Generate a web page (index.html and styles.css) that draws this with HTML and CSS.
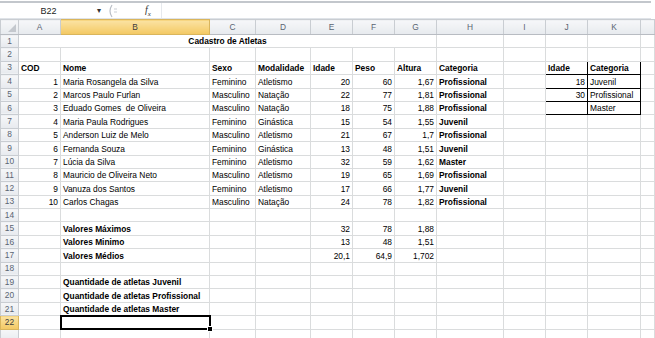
FILE: index.html
```html
<!DOCTYPE html>
<html lang="pt">
<head>
    <meta charset="UTF-8">
    <title>Cadastro de Atletas</title>
    <link rel="stylesheet" href="styles.css">
</head>
<body>
    <div class="formula-bar">
        <div class="name-box">B22</div>
        <div class="drop">&#9662;</div>
        <div class="bar-ctrl">
            <svg width="12" height="14" viewBox="0 0 12 14"><path d="M5 1 Q1 7 5 13" fill="none" stroke="#b9bec6" stroke-width="1.2"/><path d="M7 5h3M7 8h3" stroke="#c9cdd3" stroke-width="1"/></svg>
        </div>
        <div class="fx">f<sub>x</sub></div>
        <div class="formula-input"></div>
    </div>

    <table class="sheet">
        <colgroup>
            <col class="c-rh"><col class="c-a"><col class="c-b"><col class="c-c"><col class="c-d"><col class="c-e"><col class="c-f"><col class="c-g"><col class="c-h"><col class="c-i"><col class="c-j"><col class="c-k"><col>
        </colgroup>
        <tr class="col-heads">
            <th class="corner"><span class="tri"></span></th><th>A</th><th class="sel">B</th><th>C</th><th>D</th><th>E</th><th>F</th><th>G</th><th>H</th><th>I</th><th>J</th><th>K</th><th></th>
        </tr>
        <tr><th>1</th><td colspan="7" class="b center">Cadastro de Atletas</td><td></td><td></td><td></td><td></td><td></td></tr>
        <tr><th>2</th><td></td><td></td><td></td><td></td><td></td><td></td><td></td><td></td><td></td><td></td><td></td><td></td></tr>
        <tr><th>3</th><td class="b">COD</td><td class="b">Nome</td><td class="b">Sexo</td><td class="b">Modalidade</td><td class="b">Idade</td><td class="b">Peso</td><td class="b">Altura</td><td class="b">Categoria</td><td></td><td class="b box">Idade</td><td class="b box">Categoria</td><td></td></tr>
        <tr><th>4</th><td class="n">1</td><td>Maria Rosangela da Silva</td><td>Feminino</td><td>Atletismo</td><td class="n">20</td><td class="n">60</td><td class="n">1,67</td><td class="b">Profissional</td><td></td><td class="n box">18</td><td class="box">Juvenil</td><td></td></tr>
        <tr><th>5</th><td class="n">2</td><td>Marcos Paulo Furlan</td><td>Masculino</td><td>Natação</td><td class="n">22</td><td class="n">77</td><td class="n">1,81</td><td class="b">Profissional</td><td></td><td class="n box">30</td><td class="box">Profissional</td><td></td></tr>
        <tr><th>6</th><td class="n">3</td><td>Eduado Gomes&nbsp; de Oliveira</td><td>Masculino</td><td>Natação</td><td class="n">18</td><td class="n">75</td><td class="n">1,88</td><td class="b">Profissional</td><td></td><td class="box"></td><td class="box">Master</td><td></td></tr>
        <tr><th>7</th><td class="n">4</td><td>Maria Paula Rodrigues</td><td>Feminino</td><td>Ginástica</td><td class="n">15</td><td class="n">54</td><td class="n">1,55</td><td class="b">Juvenil</td><td></td><td></td><td></td><td></td></tr>
        <tr><th>8</th><td class="n">5</td><td>Anderson Luiz de Melo</td><td>Masculino</td><td>Atletismo</td><td class="n">21</td><td class="n">67</td><td class="n">1,7</td><td class="b">Profissional</td><td></td><td></td><td></td><td></td></tr>
        <tr><th>9</th><td class="n">6</td><td>Fernanda Souza</td><td>Feminino</td><td>Ginástica</td><td class="n">13</td><td class="n">48</td><td class="n">1,51</td><td class="b">Juvenil</td><td></td><td></td><td></td><td></td></tr>
        <tr><th>10</th><td class="n">7</td><td>Lúcia da Silva</td><td>Feminino</td><td>Atletismo</td><td class="n">32</td><td class="n">59</td><td class="n">1,62</td><td class="b">Master</td><td></td><td></td><td></td><td></td></tr>
        <tr><th>11</th><td class="n">8</td><td>Mauricio de Oliveira Neto</td><td>Masculino</td><td>Atletismo</td><td class="n">19</td><td class="n">65</td><td class="n">1,69</td><td class="b">Profissional</td><td></td><td></td><td></td><td></td></tr>
        <tr><th>12</th><td class="n">9</td><td>Vanuza dos Santos</td><td>Feminino</td><td>Atletismo</td><td class="n">17</td><td class="n">66</td><td class="n">1,77</td><td class="b">Juvenil</td><td></td><td></td><td></td><td></td></tr>
        <tr><th>13</th><td class="n">10</td><td>Carlos Chagas</td><td>Masculino</td><td>Natação</td><td class="n">24</td><td class="n">78</td><td class="n">1,82</td><td class="b">Profissional</td><td></td><td></td><td></td><td></td></tr>
        <tr><th>14</th><td></td><td></td><td></td><td></td><td></td><td></td><td></td><td></td><td></td><td></td><td></td><td></td></tr>
        <tr><th>15</th><td></td><td class="b">Valores Máximos</td><td></td><td></td><td class="n">32</td><td class="n">78</td><td class="n">1,88</td><td></td><td></td><td></td><td></td><td></td></tr>
        <tr><th>16</th><td></td><td class="b">Valores Minimo</td><td></td><td></td><td class="n">13</td><td class="n">48</td><td class="n">1,51</td><td></td><td></td><td></td><td></td><td></td></tr>
        <tr><th>17</th><td></td><td class="b">Valores Médios</td><td></td><td></td><td class="n">20,1</td><td class="n">64,9</td><td class="n">1,702</td><td></td><td></td><td></td><td></td><td></td></tr>
        <tr><th>18</th><td></td><td></td><td></td><td></td><td></td><td></td><td></td><td></td><td></td><td></td><td></td><td></td></tr>
        <tr><th>19</th><td></td><td class="b">Quantidade de atletas Juvenil</td><td></td><td></td><td></td><td></td><td></td><td></td><td></td><td></td><td></td><td></td></tr>
        <tr><th>20</th><td></td><td class="b">Quantidade de atletas Profissional</td><td></td><td></td><td></td><td></td><td></td><td></td><td></td><td></td><td></td><td></td></tr>
        <tr><th>21</th><td></td><td class="b">Quantidade de atletas Master</td><td></td><td></td><td></td><td></td><td></td><td></td><td></td><td></td><td></td><td></td></tr>
        <tr><th class="sel">22</th><td></td><td class="active"><span class="handle"></span></td><td></td><td></td><td></td><td></td><td></td><td></td><td></td><td></td><td></td><td></td></tr>
        <tr class="last"><th></th><td></td><td></td><td></td><td></td><td></td><td></td><td></td><td></td><td></td><td></td><td></td><td></td></tr>
    </table>
</body>
</html>
```

FILE: styles.css
```css
* {
    box-sizing: border-box;
    margin: 0;
    padding: 0;
}

body {
    background: #ffffff;
    font-family: "Liberation Sans", Arial, sans-serif;
    font-size: 8.4px;
    color: #000000;
    overflow: hidden;
}

.formula-bar {
    display: flex;
    align-items: center;
    height: 18px;
    border-top: 2px solid #c3c7cc;
    border-bottom: 1px solid #dfe3e8;
    margin-top: 1px;
    background: #ffffff;
    width: 651px;
}

.name-box {
    width: 97px;
    text-align: center;
    font-size: 9px;
    color: #222;
}

.drop {
    width: 8px;
    font-size: 8px;
    color: #333;
}

.bar-ctrl {
    display: flex;
    align-items: center;
    width: 40px;
    padding-left: 2px;
}

.fx {
    font-family: "Liberation Serif", serif;
    font-style: italic;
    font-size: 10px;
    width: 16px;
    color: #333;
}

.fx sub {
    font-size: 7px;
}

.formula-input {
    flex: 1;
    height: 100%;
    border-left: 1px solid #e6e9ed;
}

.sheet {
    table-layout: fixed;
    border-collapse: collapse;
    width: 655px;
}

.c-rh { width: 18px; }
.c-a { width: 42px; }
.c-b { width: 149px; }
.c-c { width: 46px; }
.c-d { width: 55px; }
.c-e { width: 42px; }
.c-f { width: 42px; }
.c-g { width: 42px; }
.c-h { width: 67px; }
.c-i { width: 42px; }
.c-j { width: 42px; }
.c-k { width: 53px; }

.sheet tr {
    height: 13.4px;
}

.sheet .col-heads {
    height: 15px;
}

.sheet th {
    font-weight: normal;
    color: #5a6472;
    font-size: 8.4px;
    background: linear-gradient(#f6f7f9, #e7eaee);
    border: 1px solid #c9cdd2;
    text-align: center;
    line-height: 11px;
    padding: 0;
}

.col-heads th {
    border-bottom-color: #b8bcc2;
}

.sheet th.sel {
    background: linear-gradient(#fbe3a3, #f3c862);
    color: #3d3d3d;
    border-color: #d9b55c;
}

.corner {
    position: relative;
}

.tri {
    position: absolute;
    right: 2px;
    bottom: 2px;
    width: 0;
    height: 0;
    border-left: 8px solid transparent;
    border-bottom: 8px solid #c4c8ce;
}

.sheet td {
    border: 1px solid #dadcdd;
    white-space: nowrap;
    padding: 0 2px;
    line-height: 11px;
    vertical-align: bottom;
    overflow: visible;
}

.sheet .last td {
    border-bottom: none;
}

.sheet td.n {
    text-align: right;
}

.sheet td.b {
    font-weight: bold;
}

.sheet td.center {
    text-align: center;
}

.sheet td.box {
    border: 1px solid #000000;
}

.sheet td.active {
    position: relative;
    border: 2px solid #000000;
}

.handle {
    position: absolute;
    right: -4px;
    bottom: -4px;
    width: 6px;
    height: 6px;
    background: #000000;
    border: 1px solid #ffffff;
}
```
